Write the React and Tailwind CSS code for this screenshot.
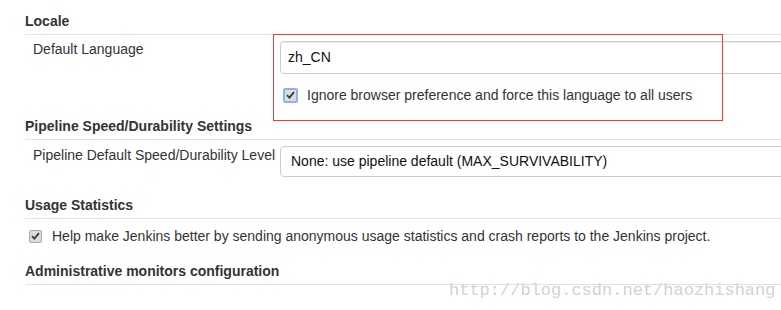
import React from 'react'

const font = { fontFamily: '"Liberation Sans", Arial, sans-serif' }

const Check = ({ focused }) => (
  <span
    className={`flex items-center justify-center rounded-[2px] ${focused ? 'w-[15px] h-[15px] border-2 border-[#8fb2ea]' : 'w-[13px] h-[13px] border border-[#a9a9a9]'} bg-[#dcdcdc]`}
  >
    <svg width="9" height="8" viewBox="0 0 9 8">
      <path d="M1 4.2 L3.4 6.6 L8 1.2" fill="none" stroke="#3a3a3a" strokeWidth="1.8" />
    </svg>
  </span>
)

const Heading = ({ children, className = '' }) => (
  <div className={`h-[24px] leading-[20px] font-bold text-[14px] text-[#333] border-b border-[#e2e2e2] ${className}`}>
    {children}
  </div>
)

export default function App() {
  return (
    <div className="relative w-[781px] h-[310px] overflow-hidden bg-white" style={font}>
      <div className="pl-[25px] pt-[11px] text-[14px] text-[#333]">

        {/* LOCALE */}
        <Heading>Locale</Heading>
        <div className="flex pt-[6px]">
          <div className="w-[255px] shrink-0 pl-[8px] leading-[20px] -mt-[2px]">Default Language</div>
          <div className="flex flex-col shrink-0">
            <div className="w-[560px] h-[33px] border border-[#cccccc] rounded-[4px] shadow-[inset_0_1px_1px_rgba(0,0,0,0.075)] flex items-center pl-[7px] text-[#111]">
              zh_CN
            </div>
            <div className="flex items-center mt-[11px] h-[20px]">
              <span className="ml-[3px]"><Check focused /></span>
              <span className="ml-[9px] leading-[20px]">Ignore browser preference and force this language to all users</span>
            </div>
          </div>
        </div>

        {/* PIPELINE */}
        <Heading className="mt-[11px]">Pipeline Speed/Durability Settings</Heading>
        <div className="flex pt-[6px]">
          <div className="w-[255px] shrink-0 pl-[8px] leading-[20px] -mt-[1px] whitespace-nowrap">Pipeline Default Speed/Durability Level</div>
          <div className="w-[560px] shrink-0 h-[31px] border border-[#cccccc] rounded-[4px] flex items-center pl-[10px] text-[#111]">
            None: use pipeline default (MAX_SURVIVABILITY)
          </div>
        </div>

        {/* USAGE */}
        <Heading className="mt-[18px]">Usage Statistics</Heading>
        <div className="flex items-center mt-[7px] h-[20px]">
          <span className="ml-[4px]"><Check /></span>
          <span className="ml-[10px] leading-[20px]">
            Help make Jenkins better by sending anonymous usage statistics and crash reports to the Jenkins project.
          </span>
        </div>

        {/* ADMIN */}
        <Heading className="mt-[15px]">Administrative monitors configuration</Heading>
      </div>

      {/* red annotation box */}
      <div className="absolute left-[273px] top-[34px] w-[450px] h-[87px] border border-[#f23a3a]" />

      {/* watermark */}
      <div
        className="absolute left-[449px] top-[280px] text-[17px] leading-[22px] text-[#d2d2d2] whitespace-nowrap"
        style={{ fontFamily: '"Liberation Mono", "Courier New", monospace' }}
      >
        http://blog.csdn.net/haozhishang
      </div>
    </div>
  )
}
